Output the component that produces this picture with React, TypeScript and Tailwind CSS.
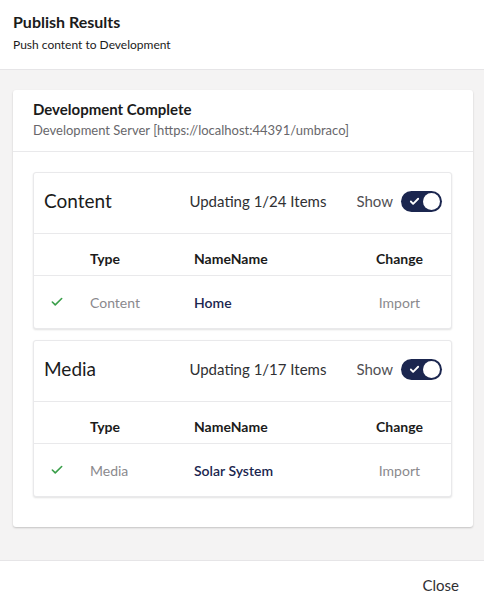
import { Check } from "lucide-react";

interface Row {
  type: string;
  name: string;
  change: string;
}

interface Section {
  title: string;
  updating: string;
  rows: Row[];
}

const sections: Section[] = [
  { title: "Content", updating: "Updating 1/24 Items", rows: [{ type: "Content", name: "Home", change: "Import" }] },
  { title: "Media", updating: "Updating 1/17 Items", rows: [{ type: "Media", name: "Solar System", change: "Import" }] },
];

function Toggle() {
  return (
    <div className="flex h-[21px] w-[41px] items-center justify-between rounded-full bg-[#1b264f] pl-[8px] pr-[2px]">
      <Check className="h-[11px] w-[11px] text-white" strokeWidth={4} />
      <div className="h-[17px] w-[17px] rounded-full bg-white" />
    </div>
  );
}

function ResultPanel({ section }: { section: Section }) {
  return (
    <div className="rounded-[3px] border border-[#e9e9eb] bg-white shadow-[0_1px_2px_rgba(0,0,0,0.12)]">
      <div className="flex h-[61px] items-center border-b border-[#e9e9eb] pb-[3px] pl-[10px] pr-[9px]">
        <div className="text-[19px] text-[#1b1b1b]">{section.title}</div>
        <div className="ml-auto text-[15px] text-[#303033]">{section.updating}</div>
        <div className="ml-[30px] text-[15px] text-[#515054]">Show</div>
        <div className="ml-[8px]">
          <Toggle />
        </div>
      </div>
      <div className="grid h-[42px] grid-cols-[56px_104px_1fr_auto] items-center border-b border-[#e9e9eb] pr-[28px] pt-[8px] text-[14px] font-bold text-[#1b1b1b]">
        <div />
        <div>Type</div>
        <div>NameName</div>
        <div>Change</div>
      </div>
      {section.rows.map((r) => (
        <div key={r.name} className="grid h-[52px] grid-cols-[56px_104px_1fr_auto] items-center pr-[31px] text-[14px]">
          <div className="pl-[16px]">
            <Check className="h-[14px] w-[14px] text-[#3a9f4a]" strokeWidth={2.75} />
          </div>
          <div className="text-[#8a898d]">{r.type}</div>
          <div className="font-semibold text-[#1b264f]">{r.name}</div>
          <div className="text-[#8a898d]">{r.change}</div>
        </div>
      ))}
    </div>
  );
}

export default function App() {
  return (
    <div className="flex h-[600px] w-[484px] flex-col overflow-hidden bg-white font-['Lato','Liberation_Sans',sans-serif]">
      <div className="h-[70px] shrink-0 border-b border-[#e6e5e7] px-[13px] pt-[12px]">
        <div className="text-[16px] font-bold leading-[20px] text-[#1b1b1b]">Publish Results</div>
        <div className="mt-[5px] text-[12px] leading-[16px] text-[#1b1b1b]">Push content to Development</div>
      </div>
      <div className="shrink-0 bg-[#f4f3f3] pb-[33px] pl-[13px] pr-[11px] pt-[20px]">
        <div className="rounded-[3px] bg-white shadow-[0_1px_2px_rgba(0,0,0,0.2)]">
          <div className="h-[62px] border-b border-[#e9e9eb] px-[20px] pt-[9px]">
            <div className="text-[15px] font-bold leading-[20px] text-[#1b1b1b]">Development Complete</div>
            <div className="mt-[2px] text-[13px] leading-[18px] text-[#68676b]">
              Development Server [https://localhost:44391/umbraco]
            </div>
          </div>
          <div className="flex flex-col gap-[11px] pb-[30px] pl-[20px] pr-[21px] pt-[20px]">
            {sections.map((s) => (
              <ResultPanel key={s.title} section={s} />
            ))}
          </div>
        </div>
      </div>
      <div className="flex-1 border-t border-[#e6e5e7] bg-white">
        <div className="flex justify-end pr-[25px] pt-[13px] text-[15px] text-[#303033]">Close</div>
      </div>
    </div>
  );
}
